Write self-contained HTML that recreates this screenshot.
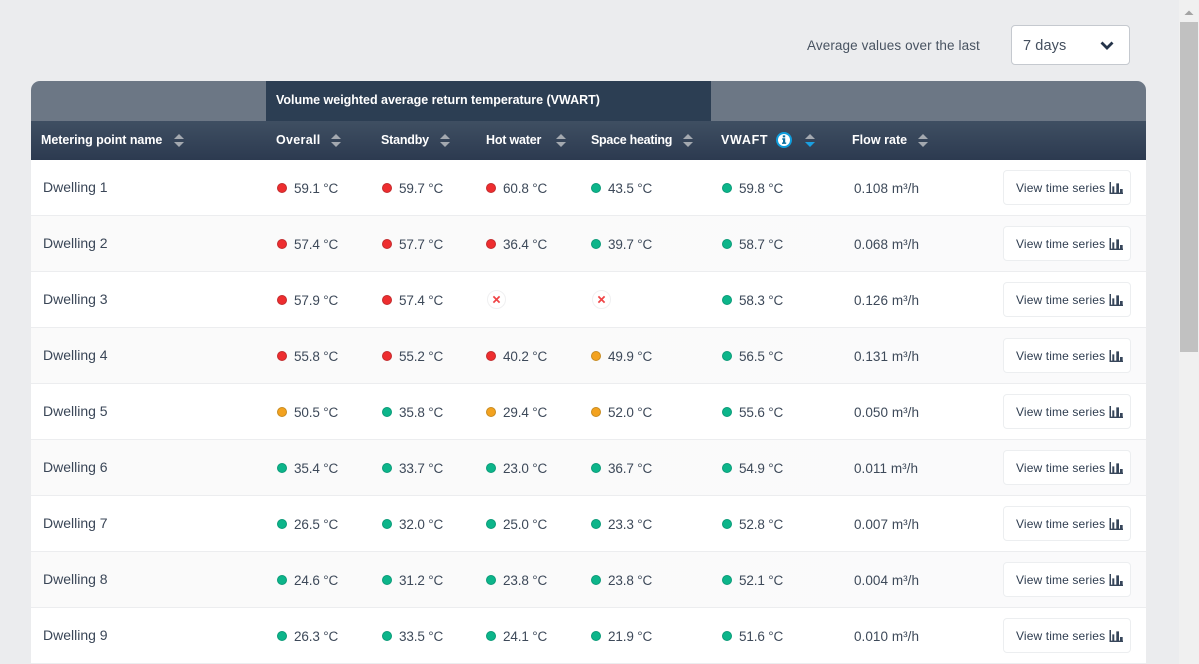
<!DOCTYPE html>
<html><head><meta charset="utf-8"><style>
html,body{margin:0;padding:0;width:1199px;height:664px;overflow:hidden;background:#ebecee;font-family:"Liberation Sans",sans-serif;color:#3a4657}
.a{position:absolute;white-space:nowrap}
.band{position:absolute;top:81px;height:40px}
.hd{position:absolute;left:31px;top:121px;width:1115px;height:39px;background:linear-gradient(#3f4f62,#2c3a50)}
.h{position:absolute;top:133px;line-height:15px;font-size:12.5px;font-weight:bold;color:#fff;white-space:nowrap;letter-spacing:-.2px}
.s{position:absolute;top:134px;width:10px;height:13px}
.r{position:absolute;left:31px;width:1115px;height:55px;background:#fff;border-bottom:1px solid #ecedef}
.r.e{background:linear-gradient(90deg,#fafafa,#fafafb)}
.n{position:absolute;left:12px;top:19px;font-size:14px;line-height:17px;white-space:nowrap}
.d{position:absolute;top:23px;width:10px;height:10px;border-radius:50%;box-sizing:border-box;border:1px solid rgba(0,40,40,.18)}
.R{background:#ee2d2f}.G{background:#0cb58a}.O{background:#f3a21f}
.t{position:absolute;top:20px;font-size:13.5px;line-height:17px;white-space:nowrap;letter-spacing:-.15px;color:#3d4959}
.f{letter-spacing:.05px}
.x{position:absolute;top:18px;width:19px;height:19px;border:1px solid #f0f0f1;border-radius:50%;background:#fff;box-sizing:border-box}
.b{position:absolute;left:972px;top:10px;width:128px;height:35px;box-sizing:border-box;background:#fff;border:1px solid #eceef0;border-radius:4px}
.b span{position:absolute;left:12px;top:10px;font-size:12px;line-height:15px;color:#2f3d50;white-space:nowrap;letter-spacing:.13px}
.b svg{position:absolute;left:105px;top:11px}
</style></head><body>
<svg width="0" height="0" style="position:absolute"><defs>
<g id="so"><path d="M5 0L10 5H0Z" fill="#a4a9b0"/><path d="M5 13L0 8H10Z" fill="#a4a9b0"/></g>
<g id="ba"><path d="M.5 0H2V10.6H14V12H.5Z M3.3 4.4H5.3V10.6H3.3Z M7.3 1.4H10V10.6H7.3Z M11 7H13.7V10.6H11Z" fill="#37465a"/></g>
<g id="cr"><path d="M5.4 5.4L11.6 11.6M11.6 5.4L5.4 11.6" stroke="#f04446" stroke-width="1.7" fill="none"/></g>
</defs></svg>

<div class="a" style="left:807px;top:38px;font-size:13.5px;line-height:16px;color:#485361;letter-spacing:.1px">Average values over the last</div>
<div class="a" style="left:1011px;top:25px;width:119px;height:40px;box-sizing:border-box;background:#fff;border:1px solid #c5c9cf;border-radius:4px">
<span style="position:absolute;left:11px;top:12px;font-size:14.5px;line-height:17px;color:#444f5e;letter-spacing:.1px">7 days</span>
<svg style="position:absolute;left:88px;top:15px" width="14" height="10"><path d="M1.5 1.5L7 7L12.5 1.5" stroke="#25344a" stroke-width="2.8" fill="none"/></svg>
</div>

<div class="band" style="left:31px;width:235px;background:#6c7785;border-radius:9px 0 0 0"></div>
<div class="band" style="left:266px;width:445px;background:#2c3e53"></div>
<div class="band" style="left:711px;width:435px;background:#6c7785;border-radius:0 9px 0 0"></div>
<div class="a" style="left:276px;top:93px;font-size:12.5px;line-height:15px;font-weight:bold;color:#fff;letter-spacing:-.02px">Volume weighted average return temperature (VWART)</div>
<div class="hd"></div>
<div class="h" style="left:41px;letter-spacing:-.05px">Metering point name</div><svg class="s" style="left:174px"><use href="#so"/></svg>
<div class="h" style="left:276px;letter-spacing:.3px">Overall</div><svg class="s" style="left:331px"><use href="#so"/></svg>
<div class="h" style="left:381px">Standby</div><svg class="s" style="left:440px"><use href="#so"/></svg>
<div class="h" style="left:486px">Hot water</div><svg class="s" style="left:556px"><use href="#so"/></svg>
<div class="h" style="left:591px;letter-spacing:-.28px">Space heating</div><svg class="s" style="left:683px"><use href="#so"/></svg>
<div class="h" style="left:721px;letter-spacing:.7px">VWAFT</div>
<svg class="a" style="left:776px;top:132px" width="16" height="16"><circle cx="8" cy="8" r="8" fill="#0f9ddc"/><circle cx="8" cy="8" r="6" fill="#fff"/><path d="M6.8 3.4h2.4v2H6.8Z M6.2 6.3h3v4.2h1v1.4H6v-1.4h1V7.7h-.8Z" fill="#0d6f9f"/></svg>
<svg class="s" style="left:805px"><path d="M5 0L10 5H0Z" fill="#a4a9b0"/><path d="M5 13L0 8H10Z" fill="#1a9fe0"/></svg>
<div class="h" style="left:852px;letter-spacing:.03px">Flow rate</div><svg class="s" style="left:918px"><use href="#so"/></svg>

<div class="r" style="top:160px"><div class="n">Dwelling 1</div>
<i class="d R" style="left:246px"></i><div class="t" style="left:263px">59.1 °C</div>
<i class="d R" style="left:351px"></i><div class="t" style="left:368px">59.7 °C</div>
<i class="d R" style="left:455px"></i><div class="t" style="left:472px">60.8 °C</div>
<i class="d G" style="left:560px"></i><div class="t" style="left:577px">43.5 °C</div>
<i class="d G" style="left:691px"></i><div class="t" style="left:708px">59.8 °C</div>
<div class="t f" style="left:823px">0.108 m³/h</div>
<div class="b"><span>View time series</span><svg width="14" height="12"><use href="#ba"/></svg></div></div>

<div class="r e" style="top:216px"><div class="n">Dwelling 2</div>
<i class="d R" style="left:246px"></i><div class="t" style="left:263px">57.4 °C</div>
<i class="d R" style="left:351px"></i><div class="t" style="left:368px">57.7 °C</div>
<i class="d R" style="left:455px"></i><div class="t" style="left:472px">36.4 °C</div>
<i class="d G" style="left:560px"></i><div class="t" style="left:577px">39.7 °C</div>
<i class="d G" style="left:691px"></i><div class="t" style="left:708px">58.7 °C</div>
<div class="t f" style="left:823px">0.068 m³/h</div>
<div class="b"><span>View time series</span><svg width="14" height="12"><use href="#ba"/></svg></div></div>

<div class="r" style="top:272px"><div class="n">Dwelling 3</div>
<i class="d R" style="left:246px"></i><div class="t" style="left:263px">57.9 °C</div>
<i class="d R" style="left:351px"></i><div class="t" style="left:368px">57.4 °C</div>
<div class="x" style="left:456px"><svg width="17" height="17"><use href="#cr"/></svg></div>
<div class="x" style="left:561px"><svg width="17" height="17"><use href="#cr"/></svg></div>
<i class="d G" style="left:691px"></i><div class="t" style="left:708px">58.3 °C</div>
<div class="t f" style="left:823px">0.126 m³/h</div>
<div class="b"><span>View time series</span><svg width="14" height="12"><use href="#ba"/></svg></div></div>

<div class="r e" style="top:328px"><div class="n">Dwelling 4</div>
<i class="d R" style="left:246px"></i><div class="t" style="left:263px">55.8 °C</div>
<i class="d R" style="left:351px"></i><div class="t" style="left:368px">55.2 °C</div>
<i class="d R" style="left:455px"></i><div class="t" style="left:472px">40.2 °C</div>
<i class="d O" style="left:560px"></i><div class="t" style="left:577px">49.9 °C</div>
<i class="d G" style="left:691px"></i><div class="t" style="left:708px">56.5 °C</div>
<div class="t f" style="left:823px">0.131 m³/h</div>
<div class="b"><span>View time series</span><svg width="14" height="12"><use href="#ba"/></svg></div></div>

<div class="r" style="top:384px"><div class="n">Dwelling 5</div>
<i class="d O" style="left:246px"></i><div class="t" style="left:263px">50.5 °C</div>
<i class="d G" style="left:351px"></i><div class="t" style="left:368px">35.8 °C</div>
<i class="d O" style="left:455px"></i><div class="t" style="left:472px">29.4 °C</div>
<i class="d O" style="left:560px"></i><div class="t" style="left:577px">52.0 °C</div>
<i class="d G" style="left:691px"></i><div class="t" style="left:708px">55.6 °C</div>
<div class="t f" style="left:823px">0.050 m³/h</div>
<div class="b"><span>View time series</span><svg width="14" height="12"><use href="#ba"/></svg></div></div>

<div class="r e" style="top:440px"><div class="n">Dwelling 6</div>
<i class="d G" style="left:246px"></i><div class="t" style="left:263px">35.4 °C</div>
<i class="d G" style="left:351px"></i><div class="t" style="left:368px">33.7 °C</div>
<i class="d G" style="left:455px"></i><div class="t" style="left:472px">23.0 °C</div>
<i class="d G" style="left:560px"></i><div class="t" style="left:577px">36.7 °C</div>
<i class="d G" style="left:691px"></i><div class="t" style="left:708px">54.9 °C</div>
<div class="t f" style="left:823px">0.011 m³/h</div>
<div class="b"><span>View time series</span><svg width="14" height="12"><use href="#ba"/></svg></div></div>

<div class="r" style="top:496px"><div class="n">Dwelling 7</div>
<i class="d G" style="left:246px"></i><div class="t" style="left:263px">26.5 °C</div>
<i class="d G" style="left:351px"></i><div class="t" style="left:368px">32.0 °C</div>
<i class="d G" style="left:455px"></i><div class="t" style="left:472px">25.0 °C</div>
<i class="d G" style="left:560px"></i><div class="t" style="left:577px">23.3 °C</div>
<i class="d G" style="left:691px"></i><div class="t" style="left:708px">52.8 °C</div>
<div class="t f" style="left:823px">0.007 m³/h</div>
<div class="b"><span>View time series</span><svg width="14" height="12"><use href="#ba"/></svg></div></div>

<div class="r e" style="top:552px"><div class="n">Dwelling 8</div>
<i class="d G" style="left:246px"></i><div class="t" style="left:263px">24.6 °C</div>
<i class="d G" style="left:351px"></i><div class="t" style="left:368px">31.2 °C</div>
<i class="d G" style="left:455px"></i><div class="t" style="left:472px">23.8 °C</div>
<i class="d G" style="left:560px"></i><div class="t" style="left:577px">23.8 °C</div>
<i class="d G" style="left:691px"></i><div class="t" style="left:708px">52.1 °C</div>
<div class="t f" style="left:823px">0.004 m³/h</div>
<div class="b"><span>View time series</span><svg width="14" height="12"><use href="#ba"/></svg></div></div>

<div class="r" style="top:608px"><div class="n">Dwelling 9</div>
<i class="d G" style="left:246px"></i><div class="t" style="left:263px">26.3 °C</div>
<i class="d G" style="left:351px"></i><div class="t" style="left:368px">33.5 °C</div>
<i class="d G" style="left:455px"></i><div class="t" style="left:472px">24.1 °C</div>
<i class="d G" style="left:560px"></i><div class="t" style="left:577px">21.9 °C</div>
<i class="d G" style="left:691px"></i><div class="t" style="left:708px">51.6 °C</div>
<div class="t f" style="left:823px">0.010 m³/h</div>
<div class="b"><span>View time series</span><svg width="14" height="12"><use href="#ba"/></svg></div></div>

<div class="a" style="left:1179px;top:0;width:20px;height:664px;background:#f0f0f0"></div>
<svg class="a" style="left:1179px;top:8px" width="20" height="10"><path d="M10 2.5L14.5 7H5.5Z" fill="#a3a3a3"/></svg>
<div class="a" style="left:1180px;top:22px;width:18px;height:330px;background:#c1c1c1"></div>
</body></html>
